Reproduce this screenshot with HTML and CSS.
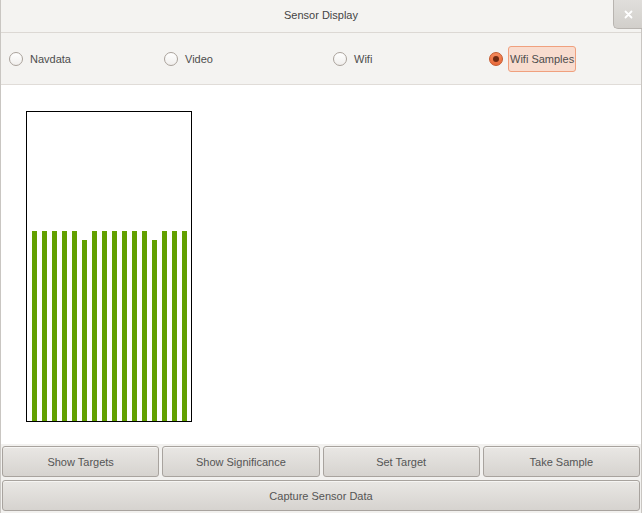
FILE: index.html
```html
<!DOCTYPE html>
<html>
<head>
<meta charset="utf-8">
<title>Sensor Display</title>
<link rel="stylesheet" href="styles.css">
</head>
<body>
<div class="window">
  <header class="titlebar">
    <span class="title">Sensor Display</span>
    <button class="close" aria-label="Close">
      <svg width="9" height="9" viewBox="0 0 9 9"><path d="M1.5 1.5L7.5 7.5M7.5 1.5L1.5 7.5" stroke="#fff" stroke-width="1.8" stroke-linecap="round"/></svg>
    </button>
  </header>
  <nav class="tabs">
    <label class="opt"><span class="radio"></span><span class="lbl">Navdata</span></label>
    <label class="opt"><span class="radio"></span><span class="lbl">Video</span></label>
    <label class="opt"><span class="radio"></span><span class="lbl">Wifi</span></label>
    <label class="opt active"><span class="radio on"></span><span class="lbl">Wifi Samples</span></label>
  </nav>
  <main class="content">
    <div class="chart">
      <div class="bar" style="height:190px"></div>
      <div class="bar" style="height:190px"></div>
      <div class="bar" style="height:190px"></div>
      <div class="bar" style="height:190px"></div>
      <div class="bar" style="height:190px"></div>
      <div class="bar" style="height:181px"></div>
      <div class="bar" style="height:190px"></div>
      <div class="bar" style="height:190px"></div>
      <div class="bar" style="height:190px"></div>
      <div class="bar" style="height:190px"></div>
      <div class="bar" style="height:190px"></div>
      <div class="bar" style="height:190px"></div>
      <div class="bar" style="height:181px"></div>
      <div class="bar" style="height:190px"></div>
      <div class="bar" style="height:190px"></div>
      <div class="bar" style="height:190px"></div>
    </div>
  </main>
  <footer class="actions">
    <div class="row4">
      <button class="btn">Show Targets</button>
      <button class="btn">Show Significance</button>
      <button class="btn">Set Target</button>
      <button class="btn">Take Sample</button>
    </div>
    <button class="btn wide">Capture Sensor Data</button>
  </footer>
</div>
</body>
</html>
```
FILE: styles.css
```css
* { box-sizing: border-box; }
html, body { margin: 0; padding: 0; }
body {
  width: 642px;
  height: 513px;
  overflow: hidden;
  font-family: "Liberation Sans", Arial, sans-serif;
  font-size: 11px;
  color: #444;
  background: #f2f1ef;
}
.window {
  display: flex;
  flex-direction: column;
  height: 513px;
  border-left: 1px solid #c9c6c2;
  border-right: 1px solid #c9c6c2;
}
.titlebar {
  position: relative;
  height: 33px;
  flex: none;
  display: flex;
  align-items: center;
  justify-content: center;
  padding-bottom: 3px;
  background: #f4f3f1;
  border-bottom: 1px solid #dcd8d4;
}
.title { color: #444; }
.close {
  position: absolute;
  top: 0;
  right: -1px;
  width: 29px;
  height: 29px;
  padding: 0;
  display: flex;
  align-items: center;
  justify-content: center;
  border: 1px solid #b8b4b0;
  border-top: none;
  border-right: none;
  border-radius: 0 0 0 5px;
  background: linear-gradient(#e0dedb, #d2cfcb);
}
.tabs {
  height: 52px;
  flex: none;
  display: grid;
  grid-template-columns: 155px 169px 156px 1fr;
  align-items: center;
  padding-left: 8px;
  background: #f4f3f1;
  border-bottom: 1px solid #e0dcd8;
}
.opt {
  display: flex;
  align-items: center;
  gap: 7px;
  color: #4d4d4d;
}
.radio {
  width: 14px;
  height: 14px;
  border-radius: 50%;
  border: 1px solid #aaa29b;
  background: linear-gradient(#ffffff, #f0eeec);
  display: flex;
  align-items: center;
  justify-content: center;
}
.radio.on {
  border-color: #c4582c;
  background: linear-gradient(#f58a5c, #e8693a);
}
.radio.on::after {
  content: "";
  width: 6px;
  height: 6px;
  border-radius: 50%;
  background: #6e2a12;
}
.active { gap: 5px; }
.active .lbl {
  display: flex;
  align-items: center;
  height: 26px;
  padding: 0 1px 0 1px;
  background: #f8dccf;
  border: 1px solid #f0a07e;
  border-radius: 3px;
}
.content {
  flex: 1;
  background: #ffffff;
  padding: 26px 0 0 25px;
}
.chart {
  width: 166px;
  height: 311px;
  border: 1px solid #000;
  display: flex;
  align-items: flex-end;
  gap: 5px;
  padding-left: 5px;
}
.bar {
  width: 5px;
  background: #63a000;
}
.actions {
  flex: none;
  display: flex;
  flex-direction: column;
  gap: 3px;
  padding: 2px 1px 2px 1px;
  background: #f2f1ef;
}
.row4 {
  display: grid;
  grid-template-columns: repeat(4, 1fr);
  gap: 3px;
}
.btn {
  height: 31px;
  font-family: "Liberation Sans", Arial, sans-serif;
  font-size: 11px;
  color: #555;
  border: 1px solid #a8a39e;
  border-radius: 3px;
  background: linear-gradient(#e9e7e4, #d6d3cf);
  box-shadow: inset 0 1px 0 #f6f5f3;
  padding: 0;
}
.wide { width: 100%; }
```
